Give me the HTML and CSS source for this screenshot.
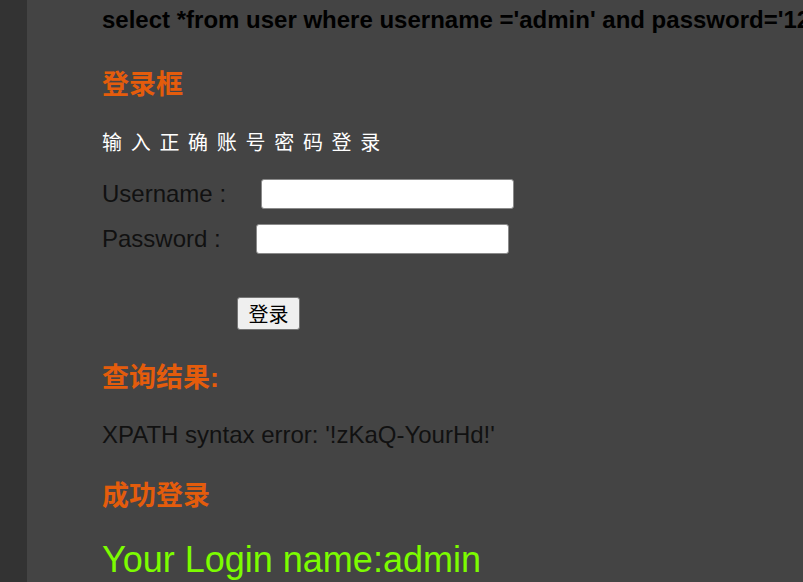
FILE: index.html
```html
<!DOCTYPE html>
<html lang="zh">
<head>
<meta charset="utf-8">
<title>login</title>
<link rel="stylesheet" href="styles.css">
</head>
<body>
<div class="page">
  <main class="main">
    <div class="sql">select *from user where username ='admin' and password='123456'</div>
    <h2 class="head h-login">登录框</h2>
    <p class="intro">输入正确账号密码登录</p>
    <form class="form">
      <div class="row row-user"><label class="lbl">Username :</label><input class="inp inp-user" type="text"></div>
      <div class="row row-pass"><label class="lbl">Password :</label><input class="inp inp-pass" type="password"></div>
      <div class="btnrow"><button class="btn" type="button">登录</button></div>
    </form>
    <h2 class="head h-result">查询结果:</h2>
    <p class="xpath">XPATH syntax error: '!zKaQ-YourHd!'</p>
    <h2 class="head h-ok">成功登录</h2>
    <p class="login">Your Login name:admin</p>
  </main>
</div>
</body>
</html>
```
FILE: styles.css
```css
html, body {
  margin: 0;
  padding: 0;
  height: 100%;
  overflow: hidden;
}
body {
  background: #333333;
  font-family: "Liberation Sans", Arial, "Noto Sans CJK SC", sans-serif;
  color: #000;
}
.page {
  display: flex;
  height: 100%;
}
.main {
  margin-left: 27px;
  flex: 1;
  background: #444444;
  padding-left: 75px;
  display: flex;
  flex-direction: column;
  align-items: flex-start;
  white-space: nowrap;
  overflow: hidden;
}
.sql {
  margin-top: 6px;
  font-size: 24px;
  font-weight: bold;
  line-height: 28px;
  color: #000;
}
.head {
  margin: 0;
  font-size: 27px;
  font-weight: bold;
  line-height: 32px;
  color: #e45c0c;
}
.h-login { margin-top: 35px; }
.intro {
  margin: 30px 0 0;
  font-size: 20px;
  line-height: 24px;
  letter-spacing: 8.7px;
  color: #fff;
}
.form {
  margin: 24px 0 0;
  display: flex;
  flex-direction: column;
  align-items: flex-start;
}
.row {
  display: flex;
  align-items: center;
  height: 30px;
}
.row-pass { margin-top: 15px; }
.lbl {
  font-size: 24px;
  line-height: 28px;
  color: #111;
}
.inp {
  width: 253px;
  height: 30px;
  box-sizing: border-box;
  border: 1px solid #8a8a8a;
  border-radius: 3px;
  background: #fff;
  padding: 0 4px;
  margin: 0;
  margin-left: 35px;
}
.btnrow {
  margin-top: 43px;
  padding-left: 135px;
}
.btn {
  height: 33px;
  width: 63px;
  box-sizing: border-box;
  border: 1px solid #767676;
  border-radius: 3px;
  background: #efefef;
  font-family: "Noto Sans CJK SC", sans-serif;
  font-size: 20px;
  line-height: 1;
  padding: 0;
  color: #000;
}
.h-result { margin-top: 32px; }
.xpath {
  margin: 27px 0 0;
  font-size: 24px;
  line-height: 28px;
  color: #111;
}
.h-ok { margin-top: 31px; }
.login {
  margin: 27px 0 0;
  font-size: 36px;
  line-height: 42px;
  color: #7cfc00;
}
```
